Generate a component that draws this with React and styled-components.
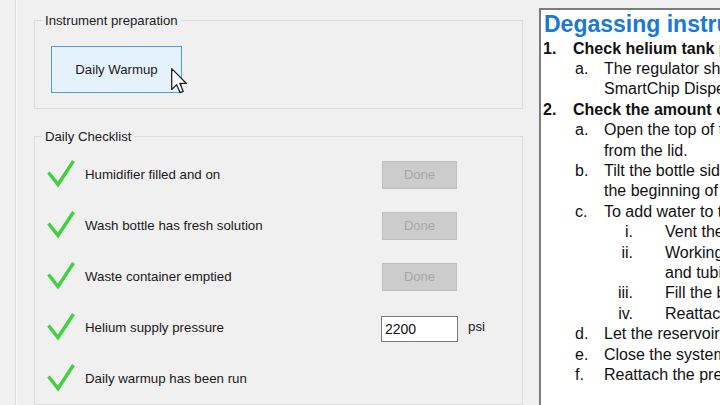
import React from 'react'
import styled, { createGlobalStyle } from 'styled-components'

const Global = createGlobalStyle`
body{
  margin:0;
  background:#f0f0f0;
  font-family:"Liberation Sans", Arial, sans-serif;
}
`

const Screen = styled.div`
display:flex;
width:720px;
height:405px;
overflow:hidden;
background:#f0f0f0;
`

const Gutter = styled.div`
flex:none;
width:15px;
border-right:1px solid #dcdcdc;
box-shadow:1px 0 0 #fafafa;
`

const LeftPane = styled.div`
flex:none;
width:489px;
padding:13px 0 0 18px;
display:flex;
flex-direction:column;
gap:20px;
`

const Group = styled.fieldset`
margin:0;
padding:0 0 ${p => p.$pb || 0}px;
border:1px solid #dcdcdc;
min-width:0;
`

const Legend = styled.legend`
margin-left:7px;
padding:0 3px;
font-size:13.2px;
line-height:15px;
color:#1a1a1a;
`

const WarmupWrap = styled.div`
position:relative;
margin:18px 0 0 16px;
width:131px;
`

const WarmupButton = styled.button`
display:block;
width:131px;
height:47px;
padding:0;
background:#e5f1fb;
border:1px solid #4a9fe0;
font-family:inherit;
font-size:13.2px;
color:#1a1a1a;
`

const Cursor = styled.svg`
position:absolute;
left:120px;
top:22px;
`

const Rows = styled.div`
padding:5px 0 0 12px;
`

const Row = styled.div`
display:grid;
grid-template-columns:28px 287px 76px auto;
column-gap:10px;
align-items:center;
height:51px;
`

const Check = styled.svg`
display:block;
margin-top:-2px;
`

const Label = styled.span`
font-size:13.3px;
color:#1a1a1a;
`

const DoneButton = styled.button`
width:75px;
height:28px;
padding:0;
background:#cccccc;
border:1px solid #bfbfbf;
font-family:inherit;
font-size:13px;
color:#a6a6a6;
`

const NumberInput = styled.input`
box-sizing:border-box;
width:77px;
height:26px;
margin:2px 0 0 -1px;
padding:0 3px;
background:#fff;
border:1px solid #7a7a7a;
font-family:inherit;
font-size:14px;
color:#111;
outline:none;
`

const Unit = styled.span`
font-size:13.3px;
color:#1a1a1a;
margin-top:-2px;
`

const DocPane = styled.div`
flex:1 1 auto;
min-width:0;
margin:8px 0 0 16px;
padding:1px 0 0 2px;
background:#fff;
border-left:2px solid #7c7c7c;
border-top:2px solid #7c7c7c;
overflow:hidden;
white-space:nowrap;
color:#111;
`

const Heading = styled.div`
margin-left:1px;
font-size:23px;
line-height:27.6px;
font-weight:700;
color:#1a78d6;
`

const levels = {
  1: { pad: 0, col: 30, gap: 0, align: 'left', weight: 700 },
  2: { pad: 32, col: 29, gap: 0, align: 'left', weight: 400 },
  3: { pad: 57, col: 33, gap: 32, align: 'right', weight: 400 },
}

const Item = styled.div`
display:grid;
grid-template-columns:${p => levels[p.$level].col}px auto;
column-gap:${p => levels[p.$level].gap}px;
padding-left:${p => levels[p.$level].pad}px;
font-size:16px;
line-height:20.4px;
font-weight:${p => levels[p.$level].weight};
`

const Marker = styled.span`
text-align:${p => levels[p.$level].align};
`

const checklist = [
  { label: 'Humidifier filled and on', control: 'done' },
  { label: 'Wash bottle has fresh solution', control: 'done' },
  { label: 'Waste container emptied', control: 'done' },
  { label: 'Helium supply pressure', control: 'input' },
  { label: 'Daily warmup has been run' },
]

const steps = [
  { level: 1, marker: '1.', lines: ['Check helium tank pressure'] },
  { level: 2, marker: 'a.', lines: ['The regulator should read at least 80 psi on the', 'SmartChip Dispenser display.'] },
  { level: 1, marker: '2.', lines: ['Check the amount of water in the humidifier'] },
  { level: 2, marker: 'a.', lines: ['Open the top of the humidifier and remove the tube', 'from the lid.'] },
  { level: 2, marker: 'b.', lines: ['Tilt the bottle sideways; the water should reach', 'the beginning of the label.'] },
  { level: 2, marker: 'c.', lines: ['To add water to the humidifier:'] },
  { level: 3, marker: 'i.', lines: ['Vent the system'] },
  { level: 3, marker: 'ii.', lines: ['Working carefully, remove the lid', 'and tubing from the bottle.'] },
  { level: 3, marker: 'iii.', lines: ['Fill the bottle with water'] },
  { level: 3, marker: 'iv.', lines: ['Reattach the lid and tubing'] },
  { level: 2, marker: 'd.', lines: ['Let the reservoir settle for a few minutes'] },
  { level: 2, marker: 'e.', lines: ['Close the system vent'] },
  { level: 2, marker: 'f.', lines: ['Reattach the pressure line'] },
]

function CheckMark() {
  return (
    <Check width="28" height="28" viewBox="0 0 28 28">
      <path d="M1.5 12.5 L11 24.5 L26.5 1" fill="none" stroke="#3fd13f" strokeWidth="3.4" strokeLinejoin="miter" />
    </Check>
  )
}

function App() {
  return (
    <Screen>
      <Global />
      <Gutter />
      <LeftPane>
        <Group $pb={15}>
          <Legend>Instrument preparation</Legend>
          <WarmupWrap>
            <WarmupButton>Daily Warmup</WarmupButton>
            <Cursor width="17" height="26" viewBox="0 0 13 20">
              <path d="M0.5 0.5 L0.5 16.5 L4.3 12.8 L7 19 L9.4 18 L6.8 11.9 L11.8 11.9 Z" fill="#fff" stroke="#222" strokeWidth="1" strokeLinejoin="round" />
            </Cursor>
          </WarmupWrap>
        </Group>
        <Group>
          <Legend>Daily Checklist</Legend>
          <Rows>
            {checklist.map(item => (
              <Row key={item.label}>
                <CheckMark />
                <Label>{item.label}</Label>
                {item.control === 'done' && <DoneButton disabled>Done</DoneButton>}
                {item.control === 'input' && <NumberInput defaultValue="2200" />}
                {item.control === 'input' && <Unit>psi</Unit>}
              </Row>
            ))}
          </Rows>
        </Group>
      </LeftPane>
      <DocPane>
        <Heading>Degassing instructions</Heading>
        {steps.map((s, i) => (
          <Item key={i} $level={s.level}>
            <Marker $level={s.level}>{s.marker}</Marker>
            <span>
              {s.lines.map(l => <div key={l}>{l}</div>)}
            </span>
          </Item>
        ))}
      </DocPane>
    </Screen>
  )
}

export default App
